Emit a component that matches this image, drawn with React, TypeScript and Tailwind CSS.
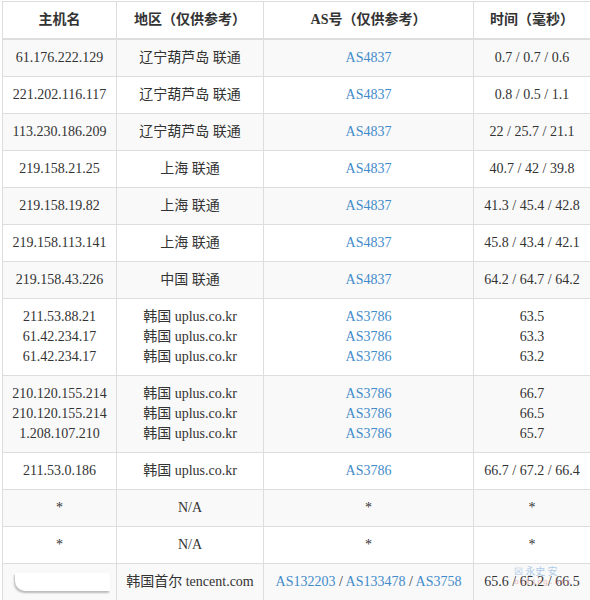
import React from "react";

type Row = { host: string[]; region: string[]; as: string[][]; time: string[]; redacted?: boolean };

const rows: Row[] = [
  { host: ["61.176.222.129"], region: ["辽宁葫芦岛 联通"], as: [["AS4837"]], time: ["0.7 / 0.7 / 0.6"] },
  { host: ["221.202.116.117"], region: ["辽宁葫芦岛 联通"], as: [["AS4837"]], time: ["0.8 / 0.5 / 1.1"] },
  { host: ["113.230.186.209"], region: ["辽宁葫芦岛 联通"], as: [["AS4837"]], time: ["22 / 25.7 / 21.1"] },
  { host: ["219.158.21.25"], region: ["上海 联通"], as: [["AS4837"]], time: ["40.7 / 42 / 39.8"] },
  { host: ["219.158.19.82"], region: ["上海 联通"], as: [["AS4837"]], time: ["41.3 / 45.4 / 42.8"] },
  { host: ["219.158.113.141"], region: ["上海 联通"], as: [["AS4837"]], time: ["45.8 / 43.4 / 42.1"] },
  { host: ["219.158.43.226"], region: ["中国 联通"], as: [["AS4837"]], time: ["64.2 / 64.7 / 64.2"] },
  {
    host: ["211.53.88.21", "61.42.234.17", "61.42.234.17"],
    region: ["韩国 uplus.co.kr", "韩国 uplus.co.kr", "韩国 uplus.co.kr"],
    as: [["AS3786"], ["AS3786"], ["AS3786"]],
    time: ["63.5", "63.3", "63.2"],
  },
  {
    host: ["210.120.155.214", "210.120.155.214", "1.208.107.210"],
    region: ["韩国 uplus.co.kr", "韩国 uplus.co.kr", "韩国 uplus.co.kr"],
    as: [["AS3786"], ["AS3786"], ["AS3786"]],
    time: ["66.7", "66.5", "65.7"],
  },
  { host: ["211.53.0.186"], region: ["韩国 uplus.co.kr"], as: [["AS3786"]], time: ["66.7 / 67.2 / 66.4"] },
  { host: ["*"], region: ["N/A"], as: [["*"]], time: ["*"] },
  { host: ["*"], region: ["N/A"], as: [["*"]], time: ["*"] },
  {
    host: [""],
    region: ["韩国首尔 tencent.com"],
    as: [["AS132203", "AS133478", "AS3758"]],
    time: ["65.6 / 65.2 / 66.5"],
    redacted: true,
  },
];

const cell =
  "border border-[#dddddd] px-[2px] py-2 text-center align-middle leading-[20px] whitespace-nowrap";

function Lines({ items }: { items: string[] }) {
  return (
    <>
      {items.map((t, i) => (
        <div key={i}>{t}</div>
      ))}
    </>
  );
}

export default function App() {
  return (
    <div
      className="w-[590px] h-[600px] overflow-hidden bg-white pl-[2px] pt-[1px] text-[#333333] text-[14px]"
      style={{ fontFamily: '"Liberation Serif", "Noto Sans CJK SC", serif' }}
    >
      <div className="relative w-[588px]">
        <table className="table-fixed border-collapse w-[588px]">
          <colgroup>
            <col className="w-[114px]" />
            <col className="w-[147px]" />
            <col className="w-[210px]" />
            <col className="w-[117px]" />
          </colgroup>
          <thead>
            <tr className="bg-white">
              <th className={`${cell} font-bold border-b-2`}>主机名</th>
              <th className={`${cell} font-bold border-b-2`}>地区（仅供参考）</th>
              <th className={`${cell} font-bold border-b-2`}>AS号（仅供参考）</th>
              <th className={`${cell} font-bold border-b-2`}>时间（毫秒）</th>
            </tr>
          </thead>
          <tbody>
            {rows.map((r, i) => (
              <tr key={i} className={i % 2 === 0 ? "bg-[#f9f9f9]" : "bg-white"}>
                <td className={cell}>
                  {r.redacted ? (
                    <div className="flex justify-start pl-[10px]">
                      <div className="h-[18px] w-[95px] rounded-bl-[10px] rounded-tr-[4px] bg-white shadow-[-1px_2px_2px_rgba(0,0,0,0.25)]" />
                    </div>
                  ) : (
                    <Lines items={r.host} />
                  )}
                </td>
                <td className={cell}>
                  <Lines items={r.region} />
                </td>
                <td className={cell}>
                  {r.as.map((line, j) => (
                    <div key={j}>
                      {line.map((a, k) => (
                        <React.Fragment key={k}>
                          {k > 0 && <span> / </span>}
                          {a === "*" ? <span>*</span> : <span className="text-[#428bca]">{a}</span>}
                        </React.Fragment>
                      ))}
                    </div>
                  ))}
                </td>
                <td className={cell}>
                  <Lines items={r.time} />
                </td>
              </tr>
            ))}
          </tbody>
        </table>
        <div className="pointer-events-none absolute left-[512px] top-[565px] flex flex-col items-start leading-none">
          <span
            className="text-[10px] text-[#8fb8e0] opacity-70"
            style={{ fontFamily: '"Noto Sans CJK SC", sans-serif' }}
          >
            ☒ 永史 安
          </span>
          <span
            className="mt-[2px] text-[8px] tracking-[1px] text-[#e0a0a0] opacity-70"
            style={{ fontFamily: '"Liberation Mono", monospace' }}
          >
            blking.net
          </span>
        </div>
      </div>
    </div>
  );
}
